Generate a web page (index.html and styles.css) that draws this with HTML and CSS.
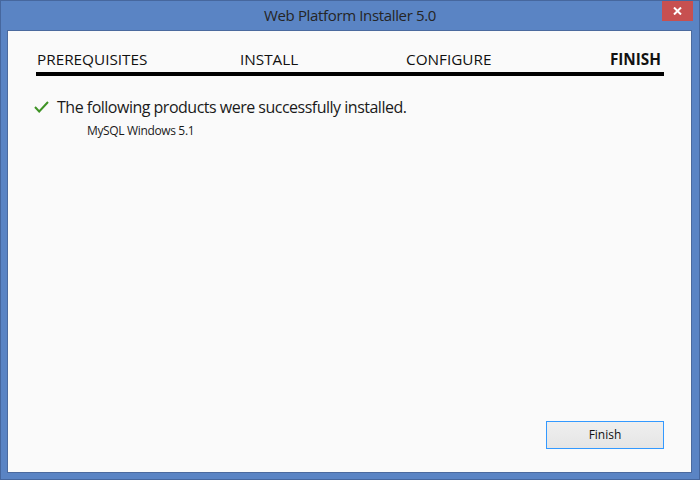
FILE: index.html
```html
<!DOCTYPE html>
<html>
<head>
    <title>Web Platform Installer 5.0</title>
    <link rel="stylesheet" href="styles.css">
</head>
<body>
    <div class="window">
        <div class="titlebar">Web Platform Installer 5.0</div>
        <div class="close-btn">
            <svg width="9" height="8" viewBox="0 0 9 8">
                <path d="M1 0.5 L8 7.5 M8 0.5 L1 7.5" stroke="#fff" stroke-width="2" fill="none"/>
            </svg>
        </div>

        <div class="client">
            <div class="steps">
                <span class="step">PREREQUISITES</span>
                <span class="step">INSTALL</span>
                <span class="step">CONFIGURE</span>
                <span class="step current">FINISH</span>
            </div>

            <div class="message">
                <svg class="check" width="15" height="12" viewBox="0 0 15 12">
                    <path d="M1 6 L5.2 10.5 L14 1" stroke="#3f9325" stroke-width="2" fill="none"/>
                </svg>
                <span>The following products were successfully installed.</span>
            </div>
            <div class="product">MySQL Windows 5.1</div>

            <div class="actions">
                <button class="btn">Finish</button>
            </div>
        </div>
    </div>
</body>
</html>
```

FILE: styles.css
```css
body {
    margin: 0;
    padding: 0;
    background: #5a84c4;
}

.window {
    position: relative;
    width: 698px;
    height: 478px;
    border: 1px solid #46679e;
    background: #5a84c4;
    display: flex;
    flex-direction: column;
    font-family: "Open Sans", sans-serif;
}

.titlebar {
    height: 29px;
    line-height: 29px;
    text-align: center;
    font-size: 15px;
    letter-spacing: -0.35px;
    color: #252525;
}

.close-btn {
    position: absolute;
    top: 0;
    right: 6px;
    width: 31px;
    height: 20px;
    background: #c75050;
    display: flex;
    align-items: center;
    justify-content: center;
}

.client {
    flex: 1;
    margin: 0 7px 6px 6px;
    border: 1px solid #4b6a9e;
    background: #fafafa;
    padding: 18px 27px 23px 28px;
    display: flex;
    flex-direction: column;
}

.steps {
    display: grid;
    grid-template-columns: 203px 166px 1fr auto;
    font-size: 15.3px;
    line-height: 20px;
    color: #111;
    padding-bottom: 3px;
    border-bottom: 4px solid #000;
}

.step {
    padding-left: 1px;
}

.step.current {
    font-weight: bold;
    padding-right: 3px;
}

.message {
    margin-top: 20px;
    display: flex;
    align-items: center;
    font-size: 16px;
    line-height: 22px;
    letter-spacing: -0.5px;
    color: #1a1a1a;
}

.check {
    margin-left: -2px;
    margin-right: 8px;
}

.product {
    margin-top: 5px;
    padding-left: 51px;
    font-size: 12px;
    line-height: 16px;
    letter-spacing: -0.35px;
    color: #1a1a1a;
}

.actions {
    margin-top: auto;
    display: flex;
    justify-content: flex-end;
}

.btn {
    width: 118px;
    height: 28px;
    border: 1px solid #3399ff;
    background: linear-gradient(#efefef, #e5e5e5);
    font-family: "Open Sans", sans-serif;
    font-size: 12px;
    color: #111;
    padding: 0 0 1px;
}
```
